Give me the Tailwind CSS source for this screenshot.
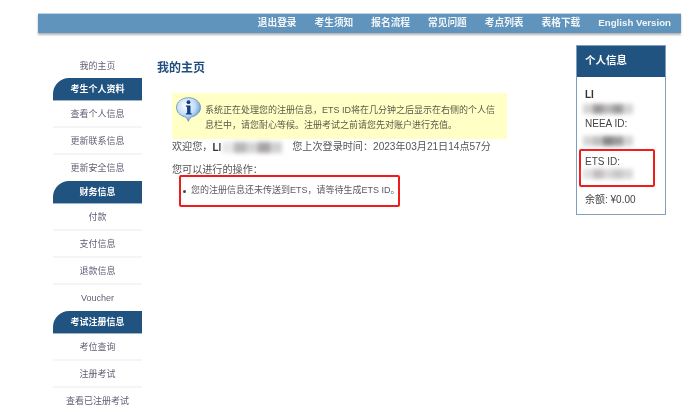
<!DOCTYPE html>
<html lang="en">
<head>
    <meta charset="UTF-8">
    <title>我的主页</title>
    <script src="https://cdn.jsdelivr.net/npm/@tailwindcss/browser@4"></script>
</head>
<body class="bg-white font-['Liberation_Sans','Noto_Sans_CJK_SC',sans-serif] text-[9px] text-[#555] overflow-hidden">
<div class="h-[413px] overflow-hidden pt-[13px] blur-[0.35px]">
    <!-- Top nav -->
    <div class="ml-[38px] w-[643px] h-[20px] bg-[#6094bc] border-t border-[#c4d3df] shadow-[0_2px_2px_#b5b5b5] flex justify-end items-center pr-[10px] gap-[18px] text-[9.7px] font-bold text-[#f2f6f9]">
        <span>退出登录</span>
        <span>考生须知</span>
        <span>报名流程</span>
        <span>常见问题</span>
        <span>考点列表</span>
        <span>表格下载</span>
        <span>English Version</span>
    </div>

    <div class="flex mt-[12px]">
        <!-- Sidebar -->
        <div class="ml-[53px] w-[89px] mt-[7px] text-center text-[#5f5f75]">
            <div class="h-[26px] leading-[28px]">我的主页</div>
            <div class="h-[23px] leading-[23px] bg-[#215381] text-white font-bold rounded-tl-[16px] border-b border-[#9db4c8]">考生个人资料</div>
            <div class="h-[27px] leading-[27px] border-b-2 border-[#f5f5f5]">查看个人信息</div>
            <div class="h-[27px] leading-[27px] border-b-2 border-[#f5f5f5]">更新联系信息</div>
            <div class="h-[26px] leading-[27px]">更新安全信息</div>
            <div class="h-[23px] leading-[23px] bg-[#215381] text-white font-bold rounded-tl-[16px] border-b border-[#9db4c8]">财务信息</div>
            <div class="h-[27px] leading-[27px] border-b-2 border-[#f5f5f5]">付款</div>
            <div class="h-[27px] leading-[27px] border-b-2 border-[#f5f5f5]">支付信息</div>
            <div class="h-[27px] leading-[27px] border-b-2 border-[#f5f5f5]">退款信息</div>
            <div class="h-[26px] leading-[27px]">Voucher</div>
            <div class="h-[23px] leading-[23px] bg-[#215381] text-white font-bold rounded-tl-[16px] border-b border-[#9db4c8]">考试注册信息</div>
            <div class="h-[27px] leading-[27px] border-b-2 border-[#f5f5f5]">考位查询</div>
            <div class="h-[27px] leading-[27px] border-b-2 border-[#f5f5f5]">注册考试</div>
            <div class="h-[26px] leading-[27px]">查看已注册考试</div>
        </div>

        <!-- Main -->
        <div class="ml-[15px] w-[350px] mt-[15px]">
            <h1 class="text-[12px] leading-[16px] font-bold text-[#1f4e7e]">我的主页</h1>
            <div class="ml-[15px] mt-[17px]">
                <div class="w-[335px] h-[46px] bg-[#ffffc6] flex pl-[4px] pt-[4px]">
                    <svg class="w-[25px] h-[25px] shrink-0" viewBox="0 0 25 25">
                        <defs>
                            <radialGradient id="bubble" cx="0.4" cy="0.35" r="0.7">
                                <stop offset="0" stop-color="#ffffff"/>
                                <stop offset="0.55" stop-color="#c4dcf4"/>
                                <stop offset="1" stop-color="#4f8fd0"/>
                            </radialGradient>
                        </defs>
                        <path d="M12.5 .7C5.8 .7 .5 5 .5 10.5c0 4.6 3.6 8 8 9.2 1.5 .4 2.6 1.400 3.800 4.600 1.200-2.600 2.200-4 3.800-4.500 4.600-1.300 8.400-4.600 8.400-9.300C24.500 5 19.200 .7 12.500 .7z" fill="url(#bubble)" stroke="#5c8fc4" stroke-width=".8"/>
                        <circle cx="12.500" cy="5.200" r="1.900" fill="#123f87"/>
                        <path d="M9.800 8.600h4.700v7.400l1.300 .5v1H9.800v-1l1.300-.5v-6l-1.300-.4z" fill="#123f87"/>
                    </svg>
                    <div class="ml-[4px] mt-[6px] leading-[15px] text-[#5a5a4a] whitespace-nowrap">
                        <div>系统正在处理您的注册信息，ETS ID将在几分钟之后显示在右侧的个人信</div>
                        <div>息栏中，请您耐心等候。注册考试之前请您先对账户进行充值。</div>
                    </div>
                </div>
                <div class="flex items-center h-[16px] text-[10.1px] text-[#555]">
                    <span>欢迎您，</span><b class="text-[#333] text-[10px]">LI</b>
                    <div class="flex w-[60px] h-[11px] blur-[2px] ml-[1px]">
                        <i class="flex-1 bg-[#e8e8e8]"></i><i class="flex-1 bg-[#b8b8bc]"></i><i class="flex-1 bg-[#d4d4d4]"></i><i class="flex-1 bg-[#a8a4a8]"></i><i class="flex-1 bg-[#d0d0d0]"></i>
                    </div>
                    <span class="ml-[10px]">您上次登录时间：2023年03月21日14点57分</span>
                </div>
                <div class="mt-[7px] h-[16px] leading-[16px] text-[10.1px]">您可以进行的操作：</div>
                <div class="-mt-[3px] ml-[7px] w-[221px] h-[32px] border-2 border-[#f01c1c] rounded-[2px] flex items-center pl-[2px] text-[#5a5a60] whitespace-nowrap">
                    <span class="shrink-0 w-[3px] h-[3px] rounded-full bg-[#444] mr-[5px]"></span>您的注册信息还未传送到ETS，请等待生成ETS ID。
                </div>
            </div>
        </div>

        <!-- Personal info panel -->
        <div class="ml-[69px] w-[90px] h-[170px] border border-[#7f9fbd] text-[10px] text-[#444]">
            <div class="h-[31px] leading-[29px] bg-[#215381] text-white font-bold text-[10.500px] pl-[8px]">个人信息</div>
            <div class="pl-[8px] pt-[11px]">
                <div class="font-bold text-[#333] leading-[13px]">LI</div>
                <div class="flex w-[50px] h-[10px] mt-[3px] blur-[2px] -ml-[2px]">
                    <i class="flex-1 bg-[#d4d4d4]"></i><i class="flex-1 bg-[#9c989c]"></i><i class="flex-1 bg-[#b8b8b8]"></i><i class="flex-1 bg-[#9c9c9c]"></i><i class="flex-1 bg-[#d4d4d4]"></i>
                </div>
                <div class="leading-[13px] mt-[3px]">NEEA ID:</div>
                <div class="flex w-[50px] h-[10px] mt-[6px] blur-[2px] -ml-[2px]">
                    <i class="flex-1 bg-[#d4d4d4]"></i><i class="flex-1 bg-[#c0c0c0]"></i><i class="flex-1 bg-[#888]"></i><i class="flex-1 bg-[#9c9c9c]"></i><i class="flex-1 bg-[#d4d4d4]"></i>
                </div>
                <div class="-ml-[6px] mt-[3px] w-[76px] h-[38px] border-2 border-[#f01c1c] rounded-[2px] pl-[4px] pt-[4px]">
                    <div class="leading-[13px]">ETS ID:</div>
                    <div class="flex w-[50px] h-[10px] mt-[1px] blur-[2px] -ml-[2px]">
                        <i class="flex-1 bg-[#e0e0e0]"></i><i class="flex-1 bg-[#c4bcc0]"></i><i class="flex-1 bg-[#d8d8d8]"></i><i class="flex-1 bg-[#c8c8c8]"></i><i class="flex-1 bg-[#d8d8d8]"></i>
                    </div>
                </div>
                <div class="leading-[13px] mt-[6px]">余额: ¥0.00</div>
            </div>
        </div>
    </div>
</div>
</body>
</html>
